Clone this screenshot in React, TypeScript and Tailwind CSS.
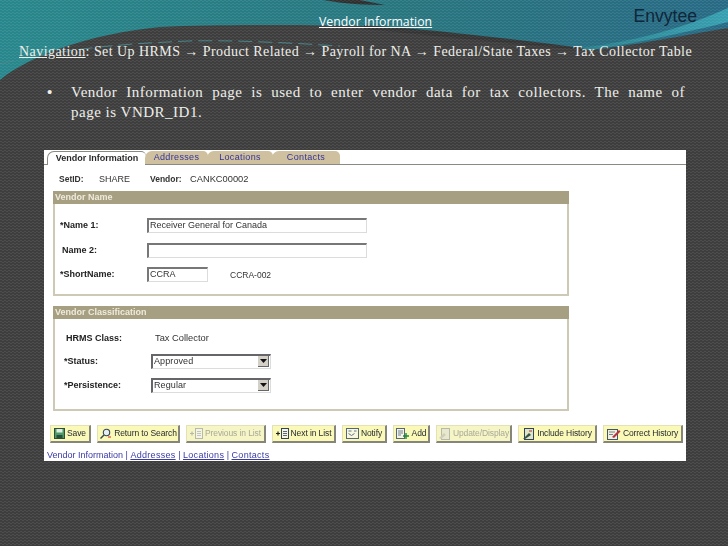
import React from "react";

const serif = "font-['Liberation_Serif',serif]";

function Background() {
  return (
    <svg className="absolute inset-0" width="728" height="546" viewBox="0 0 728 546">
      <defs>
        <linearGradient id="teal" x1="0" x2="1" y1="0" y2="0">
          <stop offset="0" stopColor="#2b9398" />
          <stop offset="0.55" stopColor="#2b808a" />
          <stop offset="1" stopColor="#2b7390" />
        </linearGradient>
        <linearGradient id="swoosh" x1="0" x2="1" y1="0" y2="0">
          <stop offset="0" stopColor="#2f8c98" />
          <stop offset="1" stopColor="#3cadc0" />
        </linearGradient>
        <pattern id="dots" width="4" height="3" patternUnits="userSpaceOnUse">
          <rect width="4" height="3" fill="#000" fillOpacity="0.08" />
          <rect x="0" y="0" width="2" height="1" fill="#fff" fillOpacity="0.08" />
          <rect x="2" y="1" width="2" height="1" fill="#fff" fillOpacity="0.08" />
        </pattern>
      </defs>
      <rect width="728" height="546" fill="#434343" />
      <path d="M0 0H728V28C680 36 630 46 590 50C520 44 440 32 364 26C300 25 220 24 160 27C90 34 30 55 0 80Z" fill="url(#teal)" />
      <path d="M323 0C345 4 364 5 385 5C375 3 365 1 360 0Z" fill="#333" />
      <path d="M364 25C440 30 520 40 590 49L585 50C510 44 440 36 364 29Z" fill="#3a3a3a" />
      <path d="M580 48C630 42 680 30 728 8V22C680 34 630 44 590 50Z" fill="url(#swoosh)" />
      <path d="M0 64C60 50 110 44 190 41C240 40 290 43 340 46" fill="none" stroke="#4d8f93" strokeWidth="1" strokeDasharray="14 6" />
      <rect width="728" height="546" fill="url(#dots)" />
    </svg>
  );
}

function BtnIcon({ kind, off }: { kind: string; off?: boolean }) {
  const c = off ? "#b9b9a8" : "#345";
  if (kind === "save")
    return (
      <svg width="11" height="11" viewBox="0 0 11 11">
        <rect x="0.5" y="0.5" width="10" height="10" fill="#4f9a6a" stroke="#2d4f3a" />
        <rect x="2.5" y="1" width="6" height="3.5" fill="#dfeee0" />
        <rect x="2.5" y="7" width="6" height="3" fill="#26503a" />
      </svg>
    );
  if (kind === "search")
    return (
      <svg width="13" height="12" viewBox="0 0 13 12">
        <circle cx="7.5" cy="4.5" r="3.2" fill="#e8eef5" stroke="#345" strokeWidth="1.1" />
        <path d="M5 7L1.5 10.5" stroke="#345" strokeWidth="1.5" />
        <path d="M9 9h3" stroke="#c22" strokeWidth="1" />
      </svg>
    );
  if (kind === "prev" || kind === "next")
    return (
      <svg width="13" height="11" viewBox="0 0 13 11">
        <path d="M0 5.5h4M2 3.5v4" stroke={off ? "#b9b9a8" : "#222"} strokeWidth="1.2" />
        <rect x="5.5" y="0.5" width="7" height="10" fill="#f4f4e8" stroke={c} />
        <path d="M7 3.5h4M7 5.5h4M7 7.5h4" stroke={c} strokeWidth="0.8" />
      </svg>
    );
  if (kind === "notify")
    return (
      <svg width="13" height="11" viewBox="0 0 13 11">
        <rect x="0.5" y="0.5" width="12" height="10" fill="#f8f8e0" stroke="#567" />
        <path d="M2.5 3h3M8 3h2.5M2.5 5.5l3 2 3-2" stroke="#567" fill="none" strokeWidth="0.9" />
      </svg>
    );
  if (kind === "add")
    return (
      <svg width="14" height="11" viewBox="0 0 14 11">
        <rect x="0.5" y="0.5" width="8" height="10" fill="#f4f4e8" stroke="#567" />
        <path d="M2 3h5M2 5h5M2 7h3" stroke="#567" strokeWidth="0.8" />
        <path d="M7 8h6M10 5v6" stroke="#1b8a3a" strokeWidth="1.4" />
      </svg>
    );
  if (kind === "update")
    return (
      <svg width="13" height="12" viewBox="0 0 13 12">
        <rect x="3.5" y="0.5" width="8" height="11" fill="#e8e8cf" stroke="#b9b9a8" />
        <path d="M1 10l5-5 2 2-5 4z" fill="#cfcfb8" />
      </svg>
    );
  if (kind === "include")
    return (
      <svg width="13" height="12" viewBox="0 0 13 12">
        <rect x="2.5" y="0.5" width="9" height="11" fill="#e0e4c8" stroke="#345" />
        <path d="M1 11l6-6 2 2-6 4z" fill="#354" />
        <path d="M7 3h3" stroke="#a33" />
      </svg>
    );
  return (
    <svg width="14" height="12" viewBox="0 0 14 12">
      <rect x="0.5" y="1.5" width="10" height="10" fill="#f0f0e0" stroke="#456" />
      <path d="M2 4h6M2 6.5h4" stroke="#567" strokeWidth="0.8" />
      <path d="M5 9L12 2l1.500 1.500L7 10z" fill="#b8323f" />
    </svg>
  );
}

function Btn({ label, icon, w, off }: { label: string; icon: string; w: string; off?: boolean }) {
  return (
    <div
      className={`${w} h-[18px] flex items-center justify-center gap-[2px] border border-[#e4e2b4] border-r-2 border-b-2 border-r-[#85857a] border-b-[#85857a] text-[8.5px] tracking-[-0.1px] whitespace-nowrap ${off ? "text-[#a9a99a] bg-[#f6f5c6]" : "text-[#1f2430] bg-[#fbf9b8]"}`}
    >
      <BtnIcon kind={icon} off={off} />
      <span>{label}</span>
    </div>
  );
}

function Tab({ label, first, w }: { label: React.ReactNode; first?: boolean; w: string }) {
  return (
    <div
      className={`${w} h-[14px] -mr-[1px] flex items-center justify-center text-[9px] rounded-tl-[7px] rounded-tr-[5px] ${first ? "bg-white font-bold text-[#2a2a2a] border-t border-l border-[#8a8a80]" : "bg-[#cfc19f] text-[#33339a] border-b border-[#8a8a80] tracking-[0.35px]"}`}
    >
      {label}
    </div>
  );
}

function Section({ title, h, children }: { title: string; h: string; children: React.ReactNode }) {
  return (
    <div className={`${h} w-[516px] ml-[9px] border-2 border-t-0 border-[#cdc9b4] flex flex-col`}>
      <div className="-mx-[2px] h-[13px] bg-[#a79f82] text-[#efeadb] font-bold text-[9px] leading-[13px] pl-[2px] shrink-0">{title}</div>
      {children}
    </div>
  );
}

function Input({ w, value }: { w: string; value?: string }) {
  return (
    <div className={`${w} h-[15px] mb-[2px] border border-[#dcdcdc] border-t-2 border-l-2 border-t-[#77777a] border-l-[#77777a] text-[9px] leading-[11px] pl-[1px] text-[#333]`}>
      {value}
    </div>
  );
}

function Select({ value }: { value: string }) {
  return (
    <div className="w-[120px] h-[15px] mb-[2px] border border-[#dcdcdc] border-t-2 border-l-2 border-t-[#66666a] border-l-[#66666a] text-[9px] leading-[11px] pl-[1px] text-[#333] tracking-[0.1px] flex justify-between items-start">
      <span>{value}</span>
      <span className="w-[11px] h-[11px] mt-[0.5px] mr-[1px] bg-[#d4d0c8] border-r border-b border-[#666] flex items-center justify-center">
        <svg width="7" height="4" viewBox="0 0 7 4"><path d="M0 0h7L3.500 4z" fill="#111" /></svg>
      </span>
    </div>
  );
}

function Link({ children }: { children: React.ReactNode }) {
  return <span className="underline text-[#3a3aa8] tracking-[0.3px]">{children}</span>;
}

export default function App() {
  return (
    <div className="relative w-[728px] h-[546px] overflow-hidden bg-[#434343]">
      <Background />
      <div className="relative flex flex-col h-full">
        <div className="h-[31px] pt-[14px] flex justify-between items-start">
          <div className="ml-[319px] font-['Open_Sans',sans-serif] text-[12.3px] leading-[16px] text-white underline">Vendor Information</div>
          <div className="mr-[31px] -mt-[8px] font-['Liberation_Sans',sans-serif] text-[17.6px] leading-[20px] text-[#10263a]">Envytee</div>
        </div>
        <div className={`mt-[13px] ml-[19px] ${serif} text-[14px] leading-[16px] tracking-[0.44px] text-[#eeeeea] whitespace-nowrap`}>
          <span className="underline">Navigation</span>: Set Up HRMS <b>→</b> Product Related <b>→</b> Payroll for NA <b>→</b> Federal/State Taxes <b>→</b> Tax Collector Table
        </div>
        <div className={`mt-[22px] ml-[47px] flex ${serif} text-[15px] leading-[20px] text-[#eeeeea]`}>
          <div className="w-[24px] font-bold">•</div>
          <div className="w-[614px] tracking-[0.5px]">
            <div className="[text-align:justify] [text-align-last:justify]">Vendor Information page is used to enter vendor data for tax collectors. The name of</div>
            <div>page is VNDR_ID1.</div>
          </div>
        </div>
        <div className="mt-[28px] ml-[44px] w-[642px] h-[311px] bg-white font-['Liberation_Sans',sans-serif] flex flex-col blur-[0.45px]">
          <div className="h-[14px] mt-[1px] pl-[3px] flex border-b border-[#8a8a80]">
            <Tab first w="w-[99px]" label="Vendor Information" />
            <Tab w="w-[63px]" label="Addresses" />
            <Tab w="w-[66px]" label="Locations" />
            <Tab w="w-[68px]" label="Contacts" />
          </div>
          <div className="h-[26px] pt-[3px] flex items-center text-[8.5px] text-[#333]">
            <span className="ml-[15px] w-[40px] font-bold">SetID:</span>
            <span className="w-[51px] text-[9px]">SHARE</span>
            <span className="w-[40px] font-bold">Vendor:</span>
            <span className="text-[9.3px]">CANKC00002</span>
          </div>
          <Section title="Vendor Name" h="h-[105px]">
            <div className="mt-[14px] flex items-center h-[16px] text-[9px]">
              <b className="ml-[5px] w-[87px] text-[#222]">*Name 1:</b>
              <Input w="w-[220px]" value="Receiver General for Canada" />
            </div>
            <div className="mt-[9px] flex items-center h-[16px] text-[9px]">
              <b className="ml-[7px] w-[85px] text-[#222]">Name 2:</b>
              <Input w="w-[220px]" />
            </div>
            <div className="mt-[8px] flex items-center h-[16px] text-[9px]">
              <b className="ml-[5px] w-[87px] text-[#222]">*ShortName:</b>
              <Input w="w-[61px]" value="CCRA" />
              <span className="ml-[22px] text-[8.5px] text-[#333]">CCRA-002</span>
            </div>
          </Section>
          <div className="h-[10px] shrink-0" />
          <Section title="Vendor Classification" h="h-[105px]">
            <div className="mt-[12px] flex items-center h-[16px] text-[9px]">
              <b className="ml-[11px] w-[89px] text-[#222]">HRMS Class:</b>
              <span className="text-[9.3px] text-[#333]">Tax Collector</span>
            </div>
            <div className="mt-[7px] flex items-center h-[16px] text-[9px]">
              <b className="ml-[9px] w-[87px] text-[#222]">*Status:</b>
              <Select value="Approved" />
            </div>
            <div className="mt-[8px] flex items-center h-[16px] text-[9px]">
              <b className="ml-[9px] w-[87px] text-[#222]">*Persistence:</b>
              <Select value="Regular" />
            </div>
          </Section>
          <div className="mt-[14px] ml-[6px] flex gap-[6px]">
            <Btn w="w-[41px]" icon="save" label="Save" />
            <Btn w="w-[83px]" icon="search" label="Return to Search" />
            <Btn w="w-[80px]" icon="prev" label="Previous in List" off />
            <Btn w="w-[64px]" icon="next" label="Next in List" />
            <Btn w="w-[45px]" icon="notify" label="Notify" />
            <Btn w="w-[37px]" icon="add" label="Add" />
            <Btn w="w-[76px]" icon="update" label="Update/Display" off />
            <Btn w="w-[79px]" icon="include" label="Include History" />
            <Btn w="w-[80px]" icon="correct" label="Correct History" />
          </div>
          <div className="mt-[6px] ml-[3px] text-[9px] text-[#3a3aa8] leading-[12px]">
            Vendor Information | <Link>Addresses</Link> | <Link>Locations</Link> | <Link>Contacts</Link>
          </div>
        </div>
      </div>
    </div>
  );
}
